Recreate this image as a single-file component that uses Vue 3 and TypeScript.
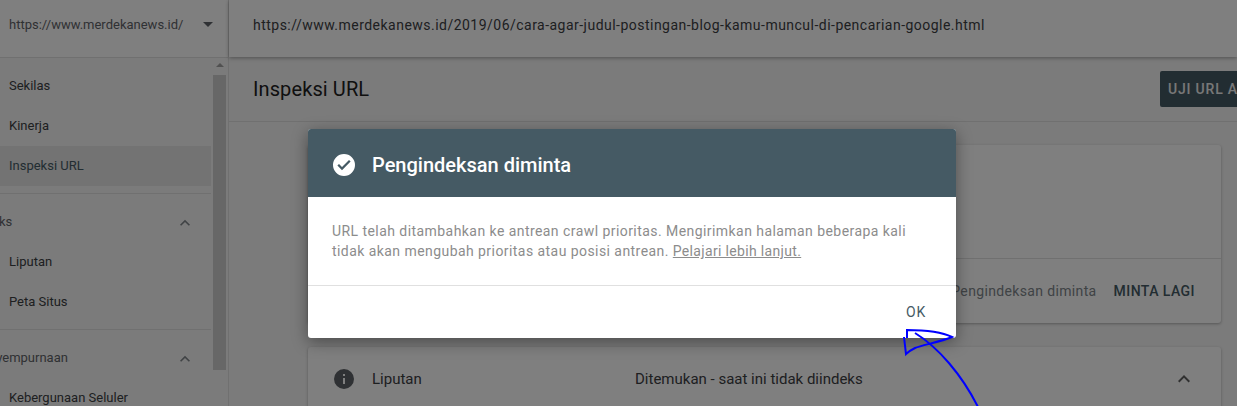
<template>
  <div class="page">
    <aside class="sidebar">
      <div class="property">
        <span>https://www.merdekanews.id/</span>
        <i class="caret"></i>
      </div>
      <div class="nav-wrap">
        <nav class="nav">
          <template v-for="group in navGroups" :key="group.title">
            <div v-if="group.title" class="nav-head">
              <span>{{ group.title }}</span>
              <svg class="chev" viewBox="0 0 24 24"><path d="M7.4 15.4 12 10.8l4.6 4.6L18 14l-6-6-6 6z" /></svg>
            </div>
            <a
              v-for="item in group.items"
              :key="item"
              class="nav-item"
              :class="{ active: item === 'Inspeksi URL' }"
            >{{ item }}</a>
            <div v-if="group.divider" class="nav-div"></div>
          </template>
        </nav>
        <div class="scrollbar">
          <i class="up"></i>
          <div class="thumb"></div>
        </div>
      </div>
    </aside>

    <main class="main">
      <header class="urlbar">https://www.merdekanews.id/2019/06/cara-agar-judul-postingan-blog-kamu-muncul-di-pencarian-google.html</header>
      <div class="titlebar">
        <h1>Inspeksi URL</h1>
        <button class="test-btn">UJI URL AKTIF</button>
      </div>
      <div class="content">
        <section class="card status">
          <div class="status-top"></div>
          <div class="status-foot">
            <span class="requested">Pengindeksan diminta</span>
            <span class="again">MINTA LAGI</span>
          </div>
        </section>
        <section class="card cover">
          <svg class="info" viewBox="0 0 24 24"><path d="M12 2a10 10 0 1 0 0 20 10 10 0 0 0 0-20zm1 15h-2v-6h2zm0-8h-2V7h2z" /></svg>
          <span class="cover-name">Liputan</span>
          <span class="cover-val">Ditemukan - saat ini tidak diindeks</span>
          <svg class="chev-big" viewBox="0 0 24 24"><path d="M7.4 15.4 12 10.8l4.6 4.6L18 14l-6-6-6 6z" /></svg>
        </section>
      </div>
    </main>

    <div class="scrim"></div>

    <div class="dialog">
      <div class="dialog-head">
        <svg class="check" viewBox="0 0 24 24"><path d="M12 1a11 11 0 1 0 0 22 11 11 0 0 0 0-22zm-2 16.2-4.6-4.6L7 11l3 3 7-7 1.600 1.600z" /></svg>
        <span>Pengindeksan diminta</span>
      </div>
      <div class="dialog-body">
        URL telah ditambahkan ke antrean crawl prioritas. Mengirimkan halaman beberapa kali
        tidak akan mengubah prioritas atau posisi antrean. <a>Pelajari lebih lanjut.</a>
      </div>
      <div class="dialog-foot">
        <span class="ok">OK</span>
      </div>
    </div>

    <svg class="scribble" width="1237" height="406" viewBox="0 0 1237 406">
      <path d="M915 333C938 347 962 375 978 407" />
      <path d="M907 338 907 330C920 330 940 331 952 337 940 342 922 345 915 348 911 350 908 352 906 354L904 337" />
    </svg>
  </div>
</template>

<script setup lang="ts">
interface NavGroup {
  title: string
  items: string[]
  divider: boolean
}

const navGroups: NavGroup[] = [
  { title: '', items: ['Sekilas', 'Kinerja', 'Inspeksi URL'], divider: true },
  { title: 'Indeks', items: ['Liputan', 'Peta Situs'], divider: true },
  { title: 'Penyempurnaan', items: ['Kebergunaan Seluler'], divider: false },
]
</script>

<style>
html,
body {
  margin: 0;
  overflow: hidden;
}
</style>

<style scoped>
.page {
  position: relative;
  display: flex;
  width: 1237px;
  height: 406px;
  overflow: hidden;
  background: #f6f6f6;
  font-family: Roboto, "Liberation Sans", sans-serif;
  color: #212121;
}

.sidebar {
  flex: none;
  width: 228px;
  border-right: 1px solid #e0e0e0;
}

.property {
  display: flex;
  align-items: center;
  justify-content: space-between;
  box-sizing: border-box;
  height: 58px;
  padding: 0 15px 8px 9px;
  border-bottom: 1px solid #e0e0e0;
  background: #fff;
  font-size: 13px;
  color: #5f6368;
  white-space: nowrap;
}

.caret {
  border: 5px solid transparent;
  border-top-color: #5f6368;
  border-bottom-width: 0;
}

.nav-wrap {
  display: flex;
  height: 348px;
  overflow: hidden;
}

.nav {
  flex: none;
  width: 237px;
  margin-left: -26px;
  padding-top: 8px;
}

.nav-item {
  display: flex;
  align-items: center;
  height: 40px;
  padding-left: 35px;
  padding-bottom: 1px;
  box-sizing: border-box;
  font-size: 13px;
  color: #3c4043;
}

.nav-item.active {
  background: #e6e6e6;
  color: #455a64;
}

.nav-div {
  height: 1px;
  margin: 7px 0;
  background: #e0e0e0;
}

.nav-head {
  display: flex;
  align-items: center;
  justify-content: space-between;
  box-sizing: border-box;
  height: 41px;
  padding: 0 16px 0 0;
  font-size: 13px;
  color: #5f6368;
}

.chev {
  width: 20px;
  height: 20px;
  margin-top: 2px;
  fill: #80868b;
}

.scrollbar {
  position: relative;
  flex: none;
  width: 13px;
  margin-left: 2px;
}

.up {
  position: absolute;
  top: 5px;
  left: 3px;
  border: 4px solid transparent;
  border-bottom-color: #a3a3a3;
  border-top-width: 0;
}

.thumb {
  width: 13px;
  height: 295px;
  margin-top: 17px;
  background: #cfcfcf;
}

.main {
  flex: 1;
  min-width: 0;
}

.urlbar {
  display: flex;
  align-items: center;
  box-sizing: border-box;
  height: 57px;
  padding: 0 24px 8px;
  background: #fff;
  box-shadow: 0 1px 4px rgba(0, 0, 0, 0.35);
  font-size: 14px;
  letter-spacing: 0.477px;
  color: #3c4043;
  white-space: nowrap;
}

.titlebar {
  display: flex;
  align-items: center;
  justify-content: space-between;
  box-sizing: border-box;
  height: 65px;
  padding-left: 24px;
  border-bottom: 1px solid #e0e0e0;
}

.titlebar h1 {
  margin: 0;
  font-size: 20px;
  font-weight: 400;
  letter-spacing: 0.1px;
  color: #212121;
}

.test-btn {
  flex: none;
  width: 100px;
  height: 36px;
  margin-right: -23px;
  padding: 0 0 0 8px;
  border: 0;
  border-radius: 2px;
  background: #455a64;
  color: #f0f0f0;
  font: 500 14px Roboto, sans-serif;
  letter-spacing: 0.8px;
  text-align: left;
  white-space: nowrap;
  overflow: hidden;
}

.content {
  padding: 23px 16px 0 79px;
}

.card {
  border-radius: 3px;
  background: #fff;
  box-shadow: 0 1px 3px rgba(0, 0, 0, 0.3);
}

.status {
  height: 178px;
  margin-bottom: 24px;
}

.status-top {
  height: 113px;
  border-bottom: 1px solid #e0e0e0;
}

.status-foot {
  display: flex;
  align-items: center;
  justify-content: flex-end;
  gap: 17px;
  box-sizing: border-box;
  height: 63px;
  padding: 1px 26px 0 0;
  font-size: 14px;
}

.requested {
  color: #80868b;
  letter-spacing: 0.35px;
}

.again {
  font-weight: 500;
  letter-spacing: 0.45px;
  font-size: 14px;
  color: #455a64;
}

.cover {
  display: flex;
  align-items: center;
  height: 64px;
  padding: 0 25px 0 24px;
  font-size: 15px;
  color: #3c4043;
}

.info {
  flex: none;
  width: 24px;
  height: 24px;
  fill: #5f6368;
}

.cover-name {
  width: 263px;
  margin-left: 16px;
}

.cover-val {
  flex: 1;
}

.chev-big {
  width: 24px;
  height: 24px;
  fill: #616161;
}

.scrim {
  position: absolute;
  inset: 0;
  background: rgba(0, 0, 0, 0.5);
}

.dialog {
  position: absolute;
  top: 129px;
  left: 308px;
  width: 648px;
  overflow: hidden;
  border-radius: 3px;
  background: #fff;
  box-shadow: 0 4px 16px rgba(0, 0, 0, 0.4);
}

.dialog-head {
  display: flex;
  align-items: center;
  gap: 16px;
  box-sizing: border-box;
  height: 68px;
  padding: 4px 0 0 24px;
  background: #455a64;
  color: #fff;
  font-size: 20px;
  font-weight: 500;
}

.check {
  flex: none;
  width: 24px;
  height: 24px;
  fill: #fff;
}

.dialog-body {
  box-sizing: border-box;
  height: 89px;
  padding: 24px 24px 0;
  border-bottom: 1px solid #e0e0e0;
  font-size: 14px;
  line-height: 20px;
  letter-spacing: 0.44px;
  color: #8c8c8c;
}

.dialog-body a {
  letter-spacing: 0.33px;
  text-decoration: underline;
}

.dialog-foot {
  display: flex;
  align-items: center;
  justify-content: flex-end;
  height: 52px;
  padding-right: 30px;
}

.ok {
  font-size: 14px;
  font-weight: 400;
  letter-spacing: 0.8px;
  color: #455a64;
}

.scribble {
  position: absolute;
  top: 0;
  left: 0;
  fill: none;
  stroke: #0000ff;
  stroke-width: 2;
}
</style>
